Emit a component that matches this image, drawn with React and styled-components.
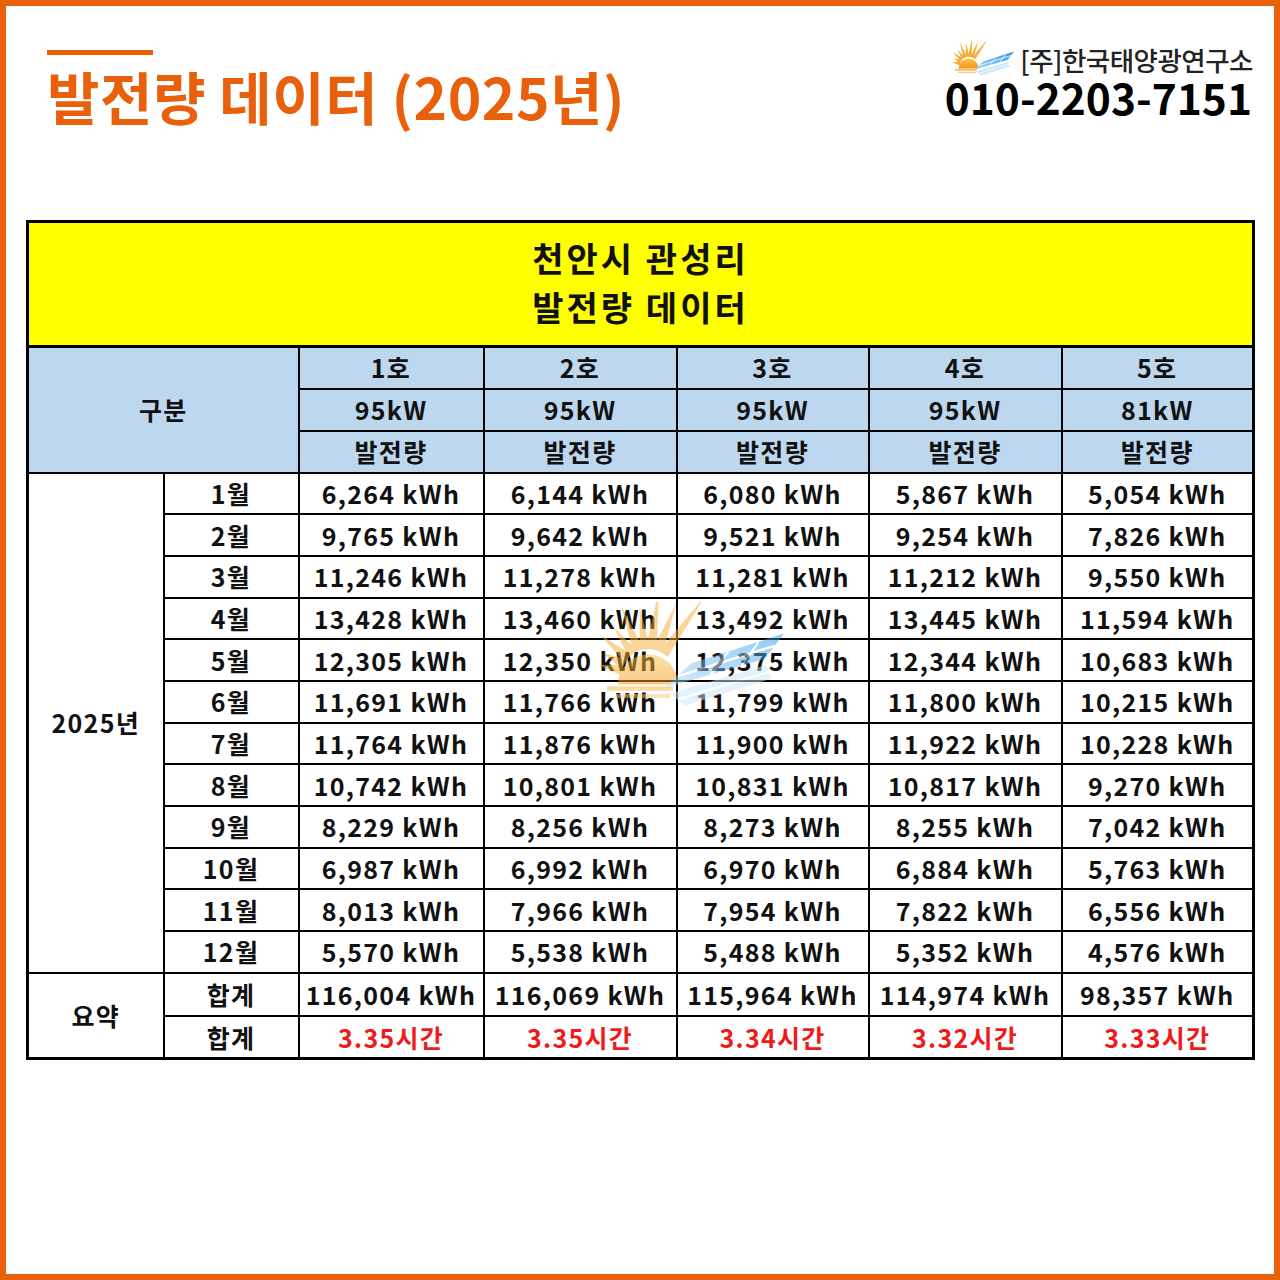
import React from 'react'
import styled, { createGlobalStyle } from 'styled-components'

const GlobalStyle = createGlobalStyle`
  html, body { margin: 0; padding: 0; background: #fff; }
  body { font-family: "Noto Sans CJK KR", "Noto Sans", sans-serif; }
`

const ORANGE = '#E8600C'

const Frame = styled.div`
  width: 1280px;
  height: 1280px;
  box-sizing: border-box;
  border: 6px solid ${ORANGE};
  background: #fff;
  padding: 0 21px 0 20px;
`

const Header = styled.header`
  height: 214px;
  box-sizing: border-box;
  padding: 44px 0 0 21px;
  display: flex;
  justify-content: space-between;
  align-items: flex-start;
`

const TitleBlock = styled.div`
  display: flex;
  flex-direction: column;
`

const AccentBar = styled.div`
  width: 106px;
  height: 5px;
  background: ${ORANGE};
  margin-bottom: 12px;
`

const Title = styled.h1`
  margin: 0;
  font-size: 57px;
  line-height: 1;
  font-weight: 700;
  color: ${ORANGE};
  letter-spacing: 0.5px;
`

const BrandBlock = styled.div`
  display: flex;
  flex-direction: column;
  align-items: flex-end;
  margin-top: -10px;
`

const BrandRow = styled.div`
  display: flex;
  align-items: center;
  gap: 6px;
  height: 40px;
`

const BrandName = styled.span`
  font-size: 26.5px;
  font-weight: 500;
  color: #222;
  line-height: 0.85;
  letter-spacing: -0.5px;
`

const Phone = styled.div`
  font-size: 42.5px;
  font-weight: 700;
  line-height: 0.85;
  color: #000;
  margin-top: -1px;
  margin-right: 1px;
`

const TableWrap = styled.div`
  position: relative;
`

const Table = styled.table`
  width: 1226px;
  border-collapse: collapse;
  table-layout: fixed;
  border: 3px solid #000;
`

const Col = styled.col`
  width: ${p => p.$w}px;
`

const Row = styled.tr`
  height: ${p => p.$h}px;
`

const Cell = styled.td`
  border: 2px solid #000;
  padding: 0;
  text-align: center;
  vertical-align: middle;
  white-space: nowrap;
  font-size: 25px;
  font-weight: 700;
  line-height: 1;
  letter-spacing: 1.3px;
  color: ${p => (p.$red ? '#F01A1A' : '#111')};
  background: ${p => p.$bg || '#fff'};
`

const BannerCell = styled.td`
  border: 3px solid #000;
  background: #FFFF00;
  text-align: center;
  vertical-align: middle;
  font-size: 34px;
  font-weight: 700;
  line-height: 1.45;
  letter-spacing: 3px;
  color: #111;
  padding: 0 0 4px;
`

const Watermark = styled.div`
  position: absolute;
  left: 566px;
  top: 382px;
  opacity: 0.5;
  pointer-events: none;
`

const BLUE = '#BDD7EE'

const SunLogo = ({ width, id }) => {
  const cx = 18.7
  const cy = 24.5
  const rays = []
  const n = 9
  for (let i = 0; i < n; i++) {
    const deg = 192 + i * 14.2
    const a = deg * Math.PI / 180
    const base = 9 + (i / (n - 1)) * 16
    const len = i % 2 ? base * 0.78 : base
    const spread = 0.2
    const r0 = 9
    const p1 = [cx + Math.cos(a - spread) * r0, cy + Math.sin(a - spread) * r0]
    const p2 = [cx + Math.cos(a + spread) * r0, cy + Math.sin(a + spread) * r0]
    const tip = [cx + Math.cos(a) * (len + 8), cy + Math.sin(a) * (len + 8)]
    rays.push(`${p1.join(',')} ${tip.join(',')} ${p2.join(',')}`)
  }
  return (
    <svg width={width} height={width * 38 / 64} viewBox="0 0 64 38">
      <defs>
        <linearGradient id={`${id}s`} x1="0" y1="0" x2="0" y2="1">
          <stop offset="0" stopColor="#FFC64A" />
          <stop offset="1" stopColor="#F39414" />
        </linearGradient>
        <linearGradient id={`${id}p`} x1="0" y1="1" x2="1" y2="0">
          <stop offset="0" stopColor="#A8D8F8" />
          <stop offset="1" stopColor="#2A98E6" />
        </linearGradient>
      </defs>
      {rays.map((pts, i) => (
        <polygon key={i} points={pts} fill="#F7AC35" />
      ))}
      <path d={`M${cx - 10},${cy + 3} A10,10 0 0 1 ${cx + 10},${cy + 3} Z`} fill={`url(#${id}s)`} />
      <rect x="5" y={cy + 3.6} width="22" height="1.5" fill="#F7B54A" />
      <rect x="8" y={cy + 6.2} width="18" height="1.3" fill="#F9C878" />
      <polygon points="24.5,28.5 33,20.5 64,10.5 57.5,19" fill={`url(#${id}p)`} />
      <line x1="28.5" y1="24.8" x2="60.8" y2="14.6" stroke="#fff" strokeWidth="0.8" />
      <line x1="39" y1="25" x2="45.5" y2="16.5" stroke="#fff" strokeWidth="0.7" />
      <line x1="49.5" y1="21.8" x2="55.5" y2="13.4" stroke="#fff" strokeWidth="0.7" />
      <polygon points="26,30.5 58,21 60,25.5 31,34.5" fill="#CDE7FA" />
      <line x1="28.5" y1="32.5" x2="59" y2="23.3" stroke="#fff" strokeWidth="0.7" />
    </svg>
  )
}

const units = [
  ['1호', '95kW'],
  ['2호', '95kW'],
  ['3호', '95kW'],
  ['4호', '95kW'],
  ['5호', '81kW'],
]

const months = [
  ['1월', '6,264', '6,144', '6,080', '5,867', '5,054'],
  ['2월', '9,765', '9,642', '9,521', '9,254', '7,826'],
  ['3월', '11,246', '11,278', '11,281', '11,212', '9,550'],
  ['4월', '13,428', '13,460', '13,492', '13,445', '11,594'],
  ['5월', '12,305', '12,350', '12,375', '12,344', '10,683'],
  ['6월', '11,691', '11,766', '11,799', '11,800', '10,215'],
  ['7월', '11,764', '11,876', '11,900', '11,922', '10,228'],
  ['8월', '10,742', '10,801', '10,831', '10,817', '9,270'],
  ['9월', '8,229', '8,256', '8,273', '8,255', '7,042'],
  ['10월', '6,987', '6,992', '6,970', '6,884', '5,763'],
  ['11월', '8,013', '7,966', '7,954', '7,822', '6,556'],
  ['12월', '5,570', '5,538', '5,488', '5,352', '4,576'],
]

const totals = ['116,004', '116,069', '115,964', '114,974', '98,357']
const hours = ['3.35', '3.35', '3.34', '3.32', '3.33']

const App = () => {
  return (
    <>
      <GlobalStyle />
      <Frame>
        <Header>
          <TitleBlock>
            <AccentBar />
            <Title>발전량 데이터 (2025년)</Title>
          </TitleBlock>
          <BrandBlock>
            <BrandRow>
              <SunLogo width={64} id="lg" />
              <BrandName>[주]한국태양광연구소</BrandName>
            </BrandRow>
            <Phone>010-2203-7151</Phone>
          </BrandBlock>
        </Header>

        <TableWrap>
          <Table>
            <colgroup>
              <Col $w={136} />
              <Col $w={135} />
              <Col $w={185} />
              <Col $w={193} />
              <Col $w={192} />
              <Col $w={193} />
              <Col $w={192} />
            </colgroup>
            <tbody>
              <Row $h={125}>
                <BannerCell colSpan={7}>
                  천안시 관성리
                  <br />
                  발전량 데이터
                </BannerCell>
              </Row>
              <Row $h={42}>
                <Cell $bg={BLUE} colSpan={2} rowSpan={3}>구분</Cell>
                {units.map(u => (
                  <Cell key={u[0]} $bg={BLUE}>{u[0]}</Cell>
                ))}
              </Row>
              <Row $h={42}>
                {units.map((u, i) => (
                  <Cell key={i} $bg={BLUE}>{u[1]}</Cell>
                ))}
              </Row>
              <Row $h={42}>
                {units.map((u, i) => (
                  <Cell key={i} $bg={BLUE}>발전량</Cell>
                ))}
              </Row>
              {months.map((m, i) => (
                <Row $h={41.7} key={m[0]}>
                  {i === 0 && <Cell rowSpan={12}>2025년</Cell>}
                  <Cell>{m[0]}</Cell>
                  {m.slice(1).map((v, j) => (
                    <Cell key={j}>{v} kWh</Cell>
                  ))}
                </Row>
              ))}
              <Row $h={43}>
                <Cell rowSpan={2}>요약</Cell>
                <Cell>합계</Cell>
                {totals.map((v, j) => (
                  <Cell key={j}>{v} kWh</Cell>
                ))}
              </Row>
              <Row $h={43}>
                <Cell>합계</Cell>
                {hours.map((v, j) => (
                  <Cell key={j} $red>{v}시간</Cell>
                ))}
              </Row>
            </tbody>
          </Table>
          <Watermark>
            <SunLogo width={192} id="wm" />
          </Watermark>
        </TableWrap>
      </Frame>
    </>
  )
}

export default App
